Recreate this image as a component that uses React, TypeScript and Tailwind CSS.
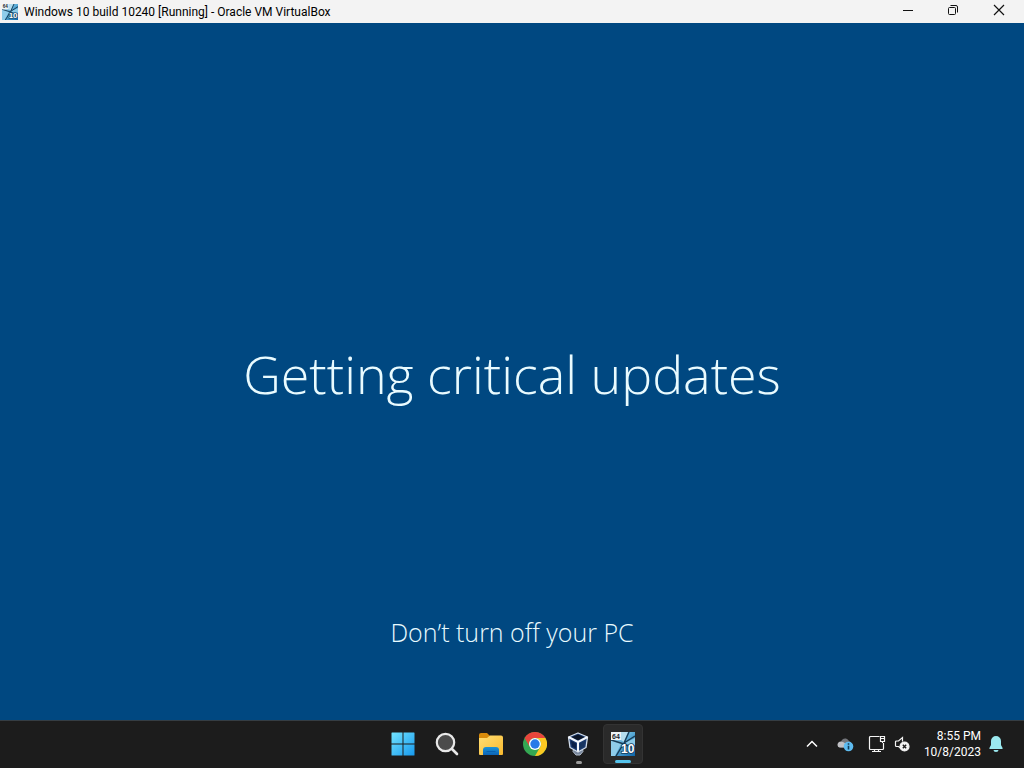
import React from "react";

function GuestIcon({ className }: { className: string }) {
  return (
    <svg viewBox="0 0 24 24" className={className} aria-hidden="true">
      <defs>
        <linearGradient id="guest-sky" x1="0" y1="0" x2="1" y2="1">
          <stop offset="0" stopColor="#c4e4f2" />
          <stop offset="0.45" stopColor="#5fb0da" />
          <stop offset="1" stopColor="#0c64a8" />
        </linearGradient>
      </defs>
      <rect width="24" height="24" fill="url(#guest-sky)" />
      <path d="M0 9 10 12 4 24H0Z" fill="#8fcdea" />
      <path d="M14 11 24 6v7l-9-1Z" fill="#8ccbe9" />
      <path d="M10 0h7l-4 10-3-2Z" fill="#b5dded" />
      <path d="M18 0 13 11 5 24M0 8l13 4 11 5M13 11l11-7" stroke="#173b55" strokeWidth="1.400" fill="none" />
      <rect x="0" y="0" width="10" height="8" fill="#eef3f5" />
      <text x="1" y="6.500" fontSize="7" fontWeight="700" fill="#18252d" fontFamily="Liberation Sans, sans-serif">64</text>
      <text x="10" y="21" fontSize="12" fontWeight="700" fill="#fff" stroke="#123b58" strokeWidth="1.500" paintOrder="stroke" fontFamily="Liberation Sans, sans-serif">10</text>
    </svg>
  );
}

function StartIcon() {
  return (
    <svg viewBox="0 0 24 24" className="size-6" aria-hidden="true">
      <defs>
        <linearGradient id="start-blue" x1="0" y1="0" x2="24" y2="24" gradientUnits="userSpaceOnUse">
          <stop stopColor="#74e5ff" />
          <stop offset="1" stopColor="#1598ee" />
        </linearGradient>
      </defs>
      <path fill="url(#start-blue)" d="M1 .5h10.500v11H.5V1Q.5.5 1 .5ZM12.500.5H23q.5 0 .5.500v10.500h-11ZM.5 12.500h11v11H1q-.5 0-.5-.5ZM12.500 12.500h11V23q0 .5-.5.500H12.500Z" />
    </svg>
  );
}

function SearchIcon() {
  return (
    <svg viewBox="0 0 24 24" className="size-6" fill="none" aria-hidden="true">
      <circle cx="10.500" cy="10.500" r="8.700" fill="#4b4b4b" stroke="#e9e9e9" strokeWidth="2.200" />
      <path d="m17 17 5 5" stroke="#e9e9e9" strokeWidth="2.600" strokeLinecap="round" />
    </svg>
  );
}

function FolderIcon() {
  return (
    <svg viewBox="0 0 26 24" className="h-6 w-6.5" aria-hidden="true">
      <defs>
        <linearGradient id="folder-face" x1="0" y1="0" x2="1" y2="1">
          <stop stopColor="#ffdf75" />
          <stop offset="1" stopColor="#f9b92d" />
        </linearGradient>
        <linearGradient id="folder-tray" x1="0" y1="0" x2="0" y2="1">
          <stop stopColor="#1b94d8" />
          <stop offset="1" stopColor="#0c63b5" />
        </linearGradient>
      </defs>
      <path d="M1 3q0-2 2-2h6l3 3-2 4H1Z" fill="#d88b0b" />
      <path d="M1 6h8l3-2.500h11q2 0 2 2V22q0 1-1 1H2q-1 0-1-1Z" fill="url(#folder-face)" />
      <path d="M5 23v-5q0-3 3-3h10q3 0 3 3v5Z" fill="url(#folder-tray)" />
      <path d="M9 19.500h8" stroke="#0860b0" strokeWidth="1.200" strokeLinecap="round" />
    </svg>
  );
}

function ChromeIcon() {
  return (
    <svg viewBox="0 0 24 24" className="size-6" aria-hidden="true">
      <circle cx="12" cy="12" r="12" fill="#34a853" />
      <path d="M1.600 6A12 12 0 0 1 22.400 6H12a6 6 0 0 0-5.200 9Z" fill="#e8453c" />
      <path d="M22.400 6A12 12 0 0 1 12 24l5.200-9A6 6 0 0 0 12 6Z" fill="#fbc922" />
      <circle cx="12" cy="12" r="6" fill="#fff" />
      <circle cx="12" cy="12" r="4.700" fill="#2879e8" />
    </svg>
  );
}

function VirtualBoxIcon() {
  return (
    <svg viewBox="0 0 24 24" className="size-6" strokeLinejoin="round" aria-hidden="true">
      <path d="M6.500 17h9l.5 2.500-3 3.500H9l-3-3.500Z" fill="#76859b" stroke="#b2bdcb" />
      <path d="m11 1 9.500 4-1.500 10.500L11 20l-8-4.500L1.500 5Z" fill="#1c3b70" stroke="#d3deec" strokeWidth="1.300" />
      <path d="m11 2.500 6.500 2.800-6.500 3-6.500-3Z" fill="#0b1528" />
      <path d="m1.500 5 9.500 5 9.500-5M11 10v9.500" fill="none" stroke="#f3f7fc" strokeWidth="2" />
      <path d="m4 8.700 5 2.700v5.400l-4-2.300Z" fill="#0a1f47" />
      <path d="m18 8.700-5 2.700v5.400l4-2.300Z" fill="#17345f" />
    </svg>
  );
}

function CloudIcon() {
  return (
    <svg viewBox="0 0 18 16" className="h-4 w-4.5" aria-hidden="true">
      <path d="M5 11.500Q1 11.500 2 8q1-2 3-2 1-4 5-3.500 2 .5 3 2.500 3 1 2 4l-3 2.500Z" fill="#74767b" />
      <path d="M1.500 8Q3 4.500 7 6l5 3-1 2.500H4Q1.500 11.500 1.500 8Z" fill="#c0c1c5" />
      <circle cx="12.500" cy="10.500" r="4.800" fill="#5ebcf0" />
      <path d="M12.500 9.800v3.600M12.500 7.200v1.500" stroke="#123e5a" strokeWidth="1.600" />
    </svg>
  );
}

function NetworkIcon() {
  return (
    <svg viewBox="0 0 18 18" className="size-4.5" fill="none" stroke="#f4f4f4" strokeWidth="1.200" aria-hidden="true">
      <path d="M11.500 1.500h-9q-1 0-1 1v11q0 1 1 1h12q1 0 1-1V8M6.500 14.500v2m4-2v2M4 16.500h9M12.500 1.500h4v5h-4ZM12.500 3.500h4M14.500 6.500V8" />
    </svg>
  );
}

function MutedIcon() {
  return (
    <svg viewBox="0 0 18 18" className="size-4.5" fill="none" stroke="#f4f4f4" strokeWidth="1.200" aria-hidden="true">
      <path d="M8.500 6.500v-4l-4 3.500h-2q-1 0-1 1v3.500q0 1 1 1h2l2 1.500" />
      <circle cx="10.500" cy="11.500" r="4.500" fill="#f4f4f4" />
      <path d="m8.800 9.800 3.400 3.400m0-3.400-3.400 3.400" stroke="#1b1b1b" strokeWidth="1.400" />
    </svg>
  );
}

function TitleBar() {
  return (
    <header className="flex h-[23px] shrink-0 items-center bg-[#f3f3f3] pr-px pl-0.5 text-black">
      <GuestIcon className="size-4 shrink-0" />
      <h1 className="ml-1.5 flex-1 truncate font-['Roboto','Open_Sans',sans-serif] text-[12px] leading-5">Windows 10 build 10240 [Running] - Oracle VM VirtualBox</h1>
      <div className="flex h-full items-center pb-1">
        <button type="button" aria-label="Minimize" className="flex h-full w-[45px] items-center justify-center">
          <svg viewBox="0 0 12 12" className="size-3" stroke="#111"><path d="M1 6.500h10" /></svg>
        </button>
        <button type="button" aria-label="Restore" className="flex h-full w-[45px] items-center justify-center">
          <svg viewBox="0 0 12 12" className="size-3" fill="none" stroke="#111"><rect x="1.500" y="3.500" width="7" height="7" rx="1" /><path d="M3.500 1.500H9q1.500 0 1.500 1.500v5.500" /></svg>
        </button>
        <button type="button" aria-label="Close" className="flex h-full w-12 items-center justify-center">
          <svg viewBox="0 0 12 12" className="size-3" stroke="#111" strokeWidth="1.200"><path d="m1 1 10 10M11 1 1 11" /></svg>
        </button>
      </div>
    </header>
  );
}

function TaskButton({ label, children }: { label: string; children: React.ReactNode }) {
  return (
    <button type="button" aria-label={label} className="relative flex size-10 items-center justify-center rounded">
      {children}
    </button>
  );
}

function Taskbar() {
  return (
    <footer className="grid h-12 shrink-0 grid-cols-[1fr_auto_1fr] items-center border-t border-[#353d43] bg-[#1c1c1c] pb-0.5 text-white">
      <span />
      <nav aria-label="Taskbar" className="flex items-center gap-1 pl-0.5">
        <TaskButton label="Start"><StartIcon /></TaskButton>
        <TaskButton label="Search"><SearchIcon /></TaskButton>
        <TaskButton label="File Explorer"><FolderIcon /></TaskButton>
        <TaskButton label="Google Chrome"><ChromeIcon /></TaskButton>
        <TaskButton label="Oracle VM VirtualBox">
          <VirtualBoxIcon />
          <span className="absolute bottom-0 h-[3px] w-1.5 rounded-full bg-[#9b9b9b]" />
        </TaskButton>
        <button type="button" aria-label="Windows 10 build 10240" className="relative flex size-10 items-center justify-center rounded border border-[#333333] bg-[#2a2a2a]">
          <GuestIcon className="size-6" />
          <span className="absolute bottom-0 h-[3px] w-4 rounded-full bg-[#55c3ec]" />
        </button>
      </nav>
      <div className="flex h-full items-center justify-end pr-[21px]">
        <button type="button" aria-label="Show hidden icons" className="mr-4 flex size-4 items-center justify-center">
          <svg viewBox="0 0 12 12" className="size-3" fill="none" stroke="#fff" strokeWidth="1.500"><path d="m1 8.500 5-5 5 5" /></svg>
        </button>
        <button type="button" aria-label="Cloud storage" className="mr-3.5"><CloudIcon /></button>
        <button type="button" aria-label="Network" className="mr-2"><NetworkIcon /></button>
        <button type="button" aria-label="Volume muted" className="mr-3"><MutedIcon /></button>
        <button type="button" className="mr-2 text-right font-['Roboto','Open_Sans',sans-serif] text-[12px] leading-4">
          <time dateTime="2023-10-08T20:55">8:55 PM<br />10/8/2023</time>
        </button>
        <button type="button" aria-label="Notifications">
          <svg viewBox="0 0 14 16" className="h-4 w-3.5" fill="#9be9ef" aria-hidden="true"><path d="M7 0a5 5 0 0 0-5 5v4L.4 12q-.4 1 .6 1h12q1 0 .6-1L12 9V5a5 5 0 0 0-5-5ZM4.500 14h5a2.500 2 0 0 1-5 0Z" /></svg>
        </button>
      </div>
    </footer>
  );
}

export default function App() {
  return (
    <div className="flex min-h-screen flex-col font-['Open_Sans','Noto_Sans',sans-serif]">
      <TitleBar />
      <main className="flex flex-1 flex-col items-center bg-[#004881] px-6 pb-[68px] text-center font-light text-[#e9fbff]">
        <div className="flex flex-1 items-center pt-28">
          <h2 className="text-[52px] leading-[72px]">Getting critical updates</h2>
        </div>
        <p className="text-[25px] leading-10">Don’t turn off your PC</p>
      </main>
      <Taskbar />
    </div>
  );
}
